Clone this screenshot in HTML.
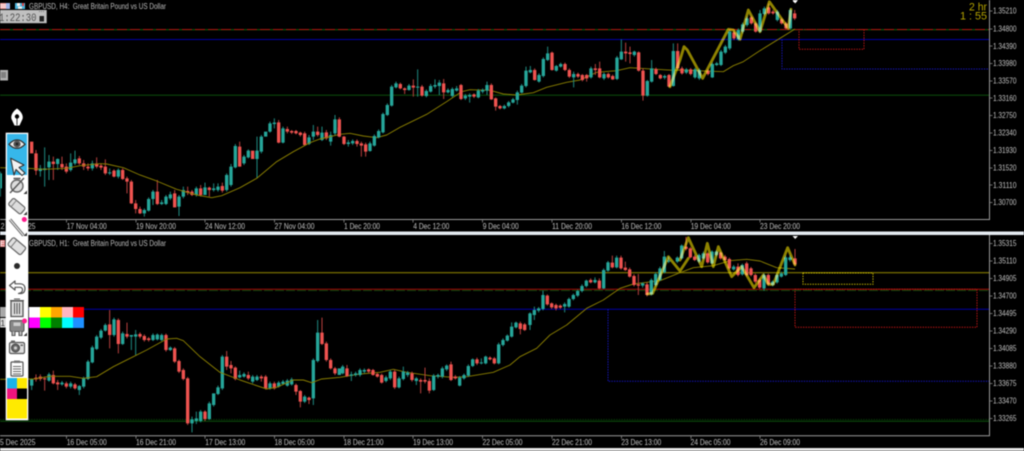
<!DOCTYPE html>
<html>
<head>
<meta charset="utf-8">
<style>
html,body{margin:0;padding:0;background:#000;width:1024px;height:451px;overflow:hidden}
svg{display:block;filter:blur(.45px)}
text{font-family:"Liberation Sans",sans-serif}
.wt{fill:none;stroke:#1f8a80;stroke-width:3}
.bt{fill:none;stroke:#26a69a;stroke-width:10}
.wr{fill:none;stroke:#b8403e;stroke-width:3}
.br{fill:none;stroke:#ef5350;stroke-width:10}
.ma{fill:none;stroke:#8c8000;stroke-width:2.8;stroke-linejoin:round}
.zz{fill:none;stroke:#8f8300;stroke-width:8.5;stroke-linejoin:round;stroke-linecap:round;mix-blend-mode:screen}
.lab{fill:#c0c0c0;font-size:7.8px}
.price{fill:#c0c0c0;font-size:7.8px}
.tri{fill:#333}
</style>
</head>
<body>
<svg width="1024" height="451" viewBox="0 0 1024 451" xmlns="http://www.w3.org/2000/svg">
<rect width="1024" height="451" fill="#000"/>

<!-- top chart horizontal lines -->
<path d="M0 29.7H989" stroke="#0b5c0b" stroke-width="1.1"/>
<path d="M0 29.5H989" stroke="#b01010" stroke-width="1" stroke-dasharray="10 3"/>
<path d="M0 39.5H989" stroke="#0000a8" stroke-width="1"/>
<path d="M0 95.2H989" stroke="#0a480a" stroke-width="1.2"/>
<path d="M799 29.5H864V49.3H799Z" fill="none" stroke="#c01414" stroke-width="1" stroke-dasharray="1.4 1.2"/>
<path d="M782 39.5V69H989" fill="none" stroke="#1414c0" stroke-width="1" stroke-dasharray="1.4 1.2"/>

<!-- bottom chart horizontal lines -->
<path d="M0 272.7H989" stroke="#6e6500" stroke-width="1.3"/>
<path d="M0 290.5H989" stroke="#0b480b" stroke-width="1" stroke-dasharray="9 2"/>
<path d="M0 289.3H989" stroke="#a80808" stroke-width="1"/>
<path d="M0 309.3H989" stroke="#0000a8" stroke-width="1"/>
<path d="M0 421.3H989" stroke="#0a500a" stroke-width="1"/>
<path d="M0 419.5H989" stroke="#0a500a" stroke-width=".8" stroke-dasharray="1.4 1.2"/>
<path d="M608 309.3V381.3H989" fill="none" stroke="#1414c0" stroke-width="1" stroke-dasharray="1.4 1.2"/>
<path d="M803 273H873V284.3H803Z" fill="none" stroke="#c8b800" stroke-width="1" stroke-dasharray="1.4 1.2"/>
<path d="M795 289.3H977V327.3H795Z" fill="none" stroke="#c01414" stroke-width="1" stroke-dasharray="1.4 1.2"/>

<!-- Top chart, part 1 -->
<g transform="scale(.33333)">
<path class="wt" d="M121 495V530M134 442V560M147 465V540M173 475V510M212 460V515M225 452V495M277 482V512M329 505V525M355 505V535M433 625V650M446 592V635M459 570V615M485 600V615M498 585V615M511 575V600M537 585V648M550 560V595M589 560V590M615 548V585M641 550V575M654 550V575M680 520V575M693 492V560M706 432V505M732 465V495M745 448V475M771 410V535M784 405V460M810 365V398M823 355V385M849 380V430M927 405V435M940 375V420M966 380V423M992 395V437M1005 345V405M1 515V590"/>
<path class="wr" d="M108 450V525M160 470V540M186 470V510M199 490V520M238 468V495M251 480V510M264 490V512M290 472V505M303 490V510M316 478V525M342 508V532M368 505V540M381 530V580M394 540V612M407 600V640M420 620V642M472 540V615M524 570V622M563 560V585M576 570V588M602 555V590M628 560V590M667 548V578M719 425V500M836 360V430M862 380V400M875 390V402M888 390V403M901 395V410M914 395V438M953 380V410M979 390V420"/>
<path class="bt" d="M121 505V513M134 505V510M147 485V502M173 477V492M212 488V510M225 478V490M277 490V505M329 517V520M355 510V530M433 630V640M446 597V632M459 575V597M485 607V612M498 590V612M511 583V595M537 590V620M550 570V590M589 565V585M615 562V585M641 565V570M654 560V570M680 525V570M693 500V555M706 438V502M732 470V490M745 452V472M771 452V477M784 410V455M797 395V410M810 370V395M823 368V372M849 385V428M927 412V432M940 395V410M966 398V420M992 405V425M1005 358V400M1 520V565"/>
<path class="br" d="M95 425V460M108 460V512M160 485V492M186 492V502M199 500V515M238 475V490M251 490V500M264 500V505M290 490V500M303 497V503M316 500V520M342 512V530M368 510V537M381 535V545M394 545V610M407 610V627M420 627V640M472 575V612M524 580V622M563 573V578M576 575V585M602 565V585M628 563V570M667 558V572M719 440V500M758 452V477M836 367V428M862 387V395M875 393V398M888 393V400M901 398V405M914 400V435M953 395V405M979 397V415M1018 383V408"/>
<path class="ma" d="M0 503L85 505L130 508L200 505L240 497L300 491L320 492L370 503L420 525L470 543L530 568L590 585L635 593L665 587L720 563L770 535L830 485L880 455L930 428L960 417L1020 403L1050 400L1090 408L1130 413L1160 405L1200 382L1280 343L1340 305L1385 275L1410 269L1470 271L1510 282L1550 285L1600 278L1640 262L1700 247L1740 240L1790 217L1850 212L1890 203L1920 205L2020 211L2040 210L2090 212L2170 215L2200 197L2230 185L2280 152L2340 115L2385 87"/>
</g>
<!-- Top chart, part 2 -->
<g transform="translate(340,0) scale(.33333)">
<path class="wt" d="M25 420V440M38 418V435M90 425V455M103 403V440M116 388V415M129 338V400M142 310V348M155 255V320M168 245V265M207 252V272M233 208V290M259 268V292M272 252V278M285 238V265M298 240V285M324 265V280M337 262V292M350 258V275M376 282V300M389 280V308M415 267V295M428 265V280M441 245V285M493 314V328M506 303V322M519 294V310M532 272V314M545 252V280M558 200V262M571 198V220M597 220V248M610 172V232M623 140V183M649 195V215M662 188V203M701 215V262M753 200V236M792 218V240M831 168V240M844 118V180M883 152V170M922 240V290M935 180V248M974 224V238M1000 130V260"/>
<path class="wr" d="M-2 352V412M12 408V435M51 418V440M64 425V470M77 428V470M181 248V268M194 262V282M220 238V290M246 255V290M311 237V297M363 252V300M402 280V294M454 250V300M467 292V332M480 315V328M584 205V242M636 155V212M675 188V213M688 205V234M714 218V234M727 222V244M740 222V245M766 192V225M779 185V235M805 218V236M818 224V240M857 128V185M870 140V190M896 154V215M909 205V302M948 203V225M961 222V238M987 222V262M1013 130V208"/>
<path class="bt" d="M25 427V432M38 423V430M90 430V453M103 408V437M116 393V412M129 342V397M142 315V345M155 260V317M168 250V262M207 257V270M233 260V263M259 273V288M272 258V275M285 255V260M298 248V258M324 270V277M337 267V288M350 265V272M376 287V295M389 285V290M415 272V292M428 270V275M441 255V272M493 318V325M506 307V318M519 298V308M532 277V300M545 257V278M558 212V258M571 210V217M597 225V245M610 177V228M623 160V180M649 198V212M662 192V200M701 222V232M753 205V232M792 222V235M831 173V237M844 155V178M883 155V165M922 243V287M935 205V245M974 228V233M1000 153V258"/>
<path class="br" d="M-2 358V410M12 410V432M51 423V432M64 430V437M77 433V455M181 252V265M194 265V270M220 257V263M246 260V287M311 250V277M363 255V297M402 283V290M454 255V298M467 295V320M480 318V325M584 210V240M636 158V210M675 192V210M688 210V230M714 222V230M727 225V240M740 225V235M766 205V210M779 205V232M805 222V232M818 228V238M857 155V160M870 157V162M896 157V212M909 212V287M948 207V222M961 225V235M987 225V260M1013 153V205"/>
</g>
<!-- Top chart, part 3 -->
<g transform="translate(680,0) scale(.33333)">
<path class="wt" d="M19 204V222M45 204V236M58 205V240M97 188V234M110 186V198M123 150V198M136 135V162M149 90V150M175 85V122M188 68V100M201 50V80M240 30V98M253 20V46M292 30V64M331 25V88"/>
<path class="wr" d="M6 200V224M32 204V226M84 208V226M162 92V120M214 48V74M227 66V98M266 10V44M279 30V44M305 54V74M318 66V88M344 30V60"/>
<path class="bt" d="M19 208V218M45 208V232M58 210V235M97 192V232M110 190V195M123 155V195M136 140V158M149 95V145M175 90V118M188 73V95M201 55V75M240 40V95M253 25V42M292 35V60M331 30V85"/>
<path class="br" d="M6 205V220M32 208V222M84 212V222M162 97V115M214 52V70M227 70V95M266 22V40M279 35V40M305 58V70M318 70V85M344 40V55"/>
<path class="zz" d="M-30 260L0 180L12 140L22 150L68 235L145 88L160 90L180 118L205 30L240 95L268 5L325 85L333 28"/>
</g>

<!-- Bottom chart, part 1 -->
<g transform="translate(0,225) scale(.33333)">
<path class="wt" d="M95 460V495M147 443V470M186 468V482M212 470V490M238 480V510M251 455V490M264 405V465M277 362V415M290 330V375M303 312V342M316 295V320M342 278V335M368 320V360M394 330V375M407 315V390M459 325V348M472 325V346M485 326V348M511 364V378M576 575V622M589 560V597M602 555V592M628 530V585M641 505V545M654 482V510M667 390V495M719 437V460M732 442V458M758 450V475M771 450V468M810 470V494M836 468V488M849 465V480M862 462V485M875 458V482M914 510V534M940 400V540M953 285V412"/>
<path class="wr" d="M108 448V470M121 448V468M134 455V497M160 437V478M173 465V495M199 470V490M225 474V494M329 255V370M355 280V385M381 293V340M420 322V340M433 328V350M446 336V350M498 326V380M524 366V414M537 404V444M550 430V466M563 456V600M615 556V588M680 378V435M693 408V445M706 424V466M745 440V465M784 450V470M797 450V494M823 470V494M888 476V510M901 495V547M927 515V537M966 278V360M979 350V410M992 400V434M1005 426V450"/>
<path class="bt" d="M95 463V482M147 448V467M186 473V478M212 475V485M238 483V495M251 460V485M264 410V462M277 367V412M290 335V372M303 317V338M316 300V317M342 283V330M368 325V357M394 330V335M407 328V335M459 330V345M472 329V343M485 330V345M511 368V375M576 583V595M589 580V588M602 560V588M628 535V582M641 505V540M654 487V507M667 395V490M719 450V457M732 447V455M758 455V470M771 455V465M810 475V490M836 473V485M849 470V477M862 467V482M875 463V478M914 515V530M940 405V520M953 323V408M1018 430V450"/>
<path class="br" d="M108 458V463M121 455V462M134 460V463M160 450V475M173 472V478M199 475V485M225 478V490M329 298V330M355 285V357M381 327V335M420 327V335M433 333V345M446 340V345M498 330V375M524 370V410M537 408V440M550 435V462M563 460V595M615 560V582M680 395V425M693 420V430M706 428V462M745 450V460M784 455V460M797 455V490M823 475V490M888 480V500M901 498V530M927 518V525M966 323V357M979 355V405M992 405V430M1005 430V445"/>
<path class="ma" d="M0 463L100 462L150 454L210 454L250 460L290 455L340 425L400 395L440 375L500 342L530 340L550 347L600 395L660 442L720 465L800 492L830 487L880 465L910 465L935 473L965 462L1020 457L1080 447L1140 442L1180 433L1220 442L1290 452L1360 457L1400 455L1480 442L1530 420L1560 395L1610 370L1650 330L1700 300L1760 250L1810 225L1860 190L1900 177L1980 167L2040 143L2080 128L2140 122L2190 107L2240 103L2280 108L2330 128L2385 132"/>
</g>
<!-- Bottom chart, part 2 -->
<g transform="translate(340,225) scale(.33333)">
<path class="wt" d="M8 420V448M34 440V468M47 440V455M60 430V455M73 430V445M138 452V472M151 435V465M177 455V490M190 425V466M203 438V456M229 456V480M281 447V498M294 446V460M307 425V460M320 418V438M359 453V484M372 446V464M385 418V456M398 400V426M424 400V418M437 392V418M476 353V418M489 340V364M502 328V350M515 292V338M528 290V310M570 262V315M583 245V285M596 246V262M609 197V256M674 232V262M687 218V248M700 206V226M713 194V216M726 178V202M739 164V187M765 157V175M791 130V192M804 108V140M830 92V130M908 172V188M934 160V212M947 142V184M960 125V168M973 78V145M986 95V114M1012 94V114"/>
<path class="wr" d="M21 420V456M86 430V444M99 432V452M112 444V458M125 446V476M164 435V492M216 440V470M242 460V505M255 428V475M268 460V505M333 410V468M346 450V464M411 398V420M450 394V406M463 396V418M541 290V328M554 294V318M622 208V242M635 232V252M648 236V256M661 238V252M752 160V175M778 160V194M817 92V130M843 92V134M856 110V138M869 128V158M882 148V184M895 147V210M921 172V214"/>
<path class="bt" d="M8 425V445M34 448V452M47 445V450M60 435V450M73 435V440M138 457V468M151 440V460M177 460V487M190 440V462M203 443V450M229 460V468M281 452V495M294 450V455M307 430V455M320 422V433M359 458V482M372 450V460M385 423V452M398 403V423M424 412V415M437 395V415M476 358V415M489 345V360M502 332V347M515 305V335M528 293V307M570 265V300M583 255V270M596 250V257M609 210V252M674 237V245M687 222V245M700 210V222M713 198V212M726 183V198M739 167V183M765 165V172M791 135V190M804 112V137M830 98V127M908 175V182M934 165V208M947 147V180M960 130V165M973 95V142M986 107V110M1012 98V110"/>
<path class="br" d="M21 430V453M86 433V440M99 435V450M112 447V455M125 450V473M164 440V487M216 445V465M242 465V470M255 465V470M268 468V497M333 418V465M346 455V460M411 403V415M450 398V403M463 400V415M541 295V312M554 298V315M622 212V238M635 235V247M648 240V250M661 242V248M752 165V172M778 167V190M817 113V127M843 98V130M856 128V135M869 133V155M882 153V180M895 178V182M921 178V210"/>
<path class="zz" d="M922 207L938 205L985 95L1020 138L1045 100"/>
</g>
<!-- Bottom chart, part 3 -->
<g transform="translate(680,225) scale(.33333)">
<path class="wt" d="M5 58V104M57 86V114M70 80V104M96 76V118M109 76V94M161 120V137M187 116V152M252 145V197M278 166V184M291 146V176M304 140V158M317 92V153M330 92V110"/>
<path class="wr" d="M18 36V76M31 66V100M44 90V108M83 82V116M122 80V104M135 90V108M148 98V134M174 115V154M200 110V154M213 126V154M226 146V174M239 160V192M265 146V182M345 72V122"/>
<path class="bt" d="M5 62V100M57 90V110M70 85V100M96 80V115M109 80V90M161 125V133M187 120V148M252 150V190M278 170V180M291 150V172M304 145V155M317 97V150M330 97V105"/>
<path class="br" d="M18 65V72M31 70V97M44 95V105M83 85V112M122 83V100M135 95V105M148 102V130M174 125V150M200 115V150M213 130V150M226 150V170M239 165V188M265 150V178M345 100V118"/>
<path class="zz" d="M0 105L25 38L65 125L82 55L100 125L115 65L155 155L185 125L222 188L250 150L265 178L280 178L323 68L345 120"/>
</g>

<!-- top markers -->
<path d="M792.5 0H798L795.2 3.5Z" fill="#fff"/>
<circle cx="795" cy="0.5" r="2" fill="#fff"/>
<path d="M792.5 236H798L795.2 239Z" fill="#fff"/>

<!-- axes -->
<path d="M0 219.5H989.5V0" fill="none" stroke="#9a9a9a" stroke-width="1"/>
<path d="M0 435.7H989.5V235" fill="none" stroke="#9a9a9a" stroke-width="1"/>
<path d="M66.5 219.5v3M136 219.5v3M205 219.5v3M274.5 219.5v3M344 219.5v3M413 219.5v3M482.5 219.5v3M552 219.5v3M621.5 219.5v3M691 219.5v3M760 219.5v3M66.5 435.7v3M136 435.7v3M205 435.7v3M274.5 435.7v3M344 435.7v3M413 435.7v3M482.5 435.7v3M552 435.7v3M621.5 435.7v3M691 435.7v3M760 435.7v3" stroke="#8a8a8a" stroke-width=".8"/>
<path d="M989.5 11h3M989.5 29h3M989.5 46h3M989.5 63.5h3M989.5 81h3M989.5 98h3M989.5 115.5h3M989.5 133h3M989.5 150.5h3M989.5 168h3M989.5 185h3M989.5 202.5h3M989.5 243.5h3M989.5 261h3M989.5 278.5h3M989.5 296h3M989.5 313.5h3M989.5 331h3M989.5 348.5h3M989.5 366h3M989.5 383.5h3M989.5 401h3M989.5 418.5h3" stroke="#8a8a8a" stroke-width=".8"/>

<!-- separators -->
<rect x="0" y="231.5" width="1024" height="3.5" fill="#e4eaf0"/>
<rect x="0" y="448" width="1024" height="3" fill="#e6e6e6"/>

<!-- price labels -->
<g class="price">
<text x="993" y="13.7" textLength="23.5" lengthAdjust="spacingAndGlyphs">1.35210</text>
<text x="993" y="31.7" textLength="23.5" lengthAdjust="spacingAndGlyphs">1.34800</text>
<text x="993" y="48.9" textLength="23.5" lengthAdjust="spacingAndGlyphs">1.34390</text>
<text x="993" y="66.2" textLength="23.5" lengthAdjust="spacingAndGlyphs">1.33980</text>
<text x="993" y="83.5" textLength="23.5" lengthAdjust="spacingAndGlyphs">1.33570</text>
<text x="993" y="100.8" textLength="23.5" lengthAdjust="spacingAndGlyphs">1.33160</text>
<text x="993" y="118.1" textLength="23.5" lengthAdjust="spacingAndGlyphs">1.32750</text>
<text x="993" y="135.7" textLength="23.5" lengthAdjust="spacingAndGlyphs">1.32340</text>
<text x="993" y="153.2" textLength="23.5" lengthAdjust="spacingAndGlyphs">1.31930</text>
<text x="993" y="170.6" textLength="23.5" lengthAdjust="spacingAndGlyphs">1.31520</text>
<text x="993" y="187.9" textLength="23.5" lengthAdjust="spacingAndGlyphs">1.31110</text>
<text x="993" y="205.2" textLength="23.5" lengthAdjust="spacingAndGlyphs">1.30700</text>
<text x="993" y="246.1" textLength="23.5" lengthAdjust="spacingAndGlyphs">1.35315</text>
<text x="993" y="263.6" textLength="23.5" lengthAdjust="spacingAndGlyphs">1.35110</text>
<text x="993" y="281.2" textLength="23.5" lengthAdjust="spacingAndGlyphs">1.34905</text>
<text x="993" y="298.7" textLength="23.5" lengthAdjust="spacingAndGlyphs">1.34700</text>
<text x="993" y="316.2" textLength="23.5" lengthAdjust="spacingAndGlyphs">1.34495</text>
<text x="993" y="333.7" textLength="23.5" lengthAdjust="spacingAndGlyphs">1.34290</text>
<text x="993" y="351.2" textLength="23.5" lengthAdjust="spacingAndGlyphs">1.34085</text>
<text x="993" y="368.7" textLength="23.5" lengthAdjust="spacingAndGlyphs">1.33880</text>
<text x="993" y="386.2" textLength="23.5" lengthAdjust="spacingAndGlyphs">1.33675</text>
<text x="993" y="403.7" textLength="23.5" lengthAdjust="spacingAndGlyphs">1.33470</text>
<text x="993" y="421.2" textLength="23.5" lengthAdjust="spacingAndGlyphs">1.33265</text>
</g>

<!-- time labels -->
<g class="lab">
<text x="-3" y="229" textLength="38.5" lengthAdjust="spacingAndGlyphs">12 Nov 2025</text>
<text x="66.7" y="229" textLength="40" lengthAdjust="spacingAndGlyphs">17 Nov 04:00</text>
<text x="136" y="229" textLength="40" lengthAdjust="spacingAndGlyphs">19 Nov 20:00</text>
<text x="205" y="229" textLength="40" lengthAdjust="spacingAndGlyphs">24 Nov 12:00</text>
<text x="274.5" y="229" textLength="40" lengthAdjust="spacingAndGlyphs">27 Nov 04:00</text>
<text x="344" y="229" textLength="36" lengthAdjust="spacingAndGlyphs">1 Dec 20:00</text>
<text x="413.3" y="229" textLength="36" lengthAdjust="spacingAndGlyphs">4 Dec 12:00</text>
<text x="482.7" y="229" textLength="36" lengthAdjust="spacingAndGlyphs">9 Dec 04:00</text>
<text x="552" y="229" textLength="40" lengthAdjust="spacingAndGlyphs">11 Dec 20:00</text>
<text x="621.4" y="229" textLength="40" lengthAdjust="spacingAndGlyphs">16 Dec 12:00</text>
<text x="690.7" y="229" textLength="40" lengthAdjust="spacingAndGlyphs">19 Dec 04:00</text>
<text x="760" y="229" textLength="40" lengthAdjust="spacingAndGlyphs">23 Dec 20:00</text>

<text x="-4" y="444.8" textLength="39.5" lengthAdjust="spacingAndGlyphs">15 Dec 2025</text>
<text x="66.7" y="444.8" textLength="40" lengthAdjust="spacingAndGlyphs">16 Dec 05:00</text>
<text x="136" y="444.8" textLength="40" lengthAdjust="spacingAndGlyphs">16 Dec 21:00</text>
<text x="205.3" y="444.8" textLength="40" lengthAdjust="spacingAndGlyphs">17 Dec 13:00</text>
<text x="274.5" y="444.8" textLength="40" lengthAdjust="spacingAndGlyphs">18 Dec 05:00</text>
<text x="343.5" y="444.8" textLength="40" lengthAdjust="spacingAndGlyphs">18 Dec 21:00</text>
<text x="413" y="444.8" textLength="40" lengthAdjust="spacingAndGlyphs">19 Dec 13:00</text>
<text x="482.5" y="444.8" textLength="40" lengthAdjust="spacingAndGlyphs">22 Dec 05:00</text>
<text x="552" y="444.8" textLength="40" lengthAdjust="spacingAndGlyphs">22 Dec 21:00</text>
<text x="621.2" y="444.8" textLength="40" lengthAdjust="spacingAndGlyphs">23 Dec 13:00</text>
<text x="690.5" y="444.8" textLength="40" lengthAdjust="spacingAndGlyphs">24 Dec 05:00</text>
<text x="760" y="444.8" textLength="40" lengthAdjust="spacingAndGlyphs">26 Dec 09:00</text>
</g>

<!-- titles -->
<text x="29" y="9.2" fill="#bcbcbc" font-size="7.8" textLength="137" lengthAdjust="spacingAndGlyphs" xml:space="preserve">GBPUSD, H4:  Great Britain Pound vs US Dollar</text>
<text x="29" y="246" fill="#bcbcbc" font-size="7.8" textLength="137" lengthAdjust="spacingAndGlyphs" xml:space="preserve">GBPUSD, H1:  Great Britain Pound vs US Dollar</text>

<!-- corner countdown -->
<text x="987" y="10.5" fill="#b5a400" font-size="11" text-anchor="end" textLength="18" lengthAdjust="spacingAndGlyphs">2 hr</text>
<text x="987" y="19.5" fill="#b5a400" font-size="11" text-anchor="end" textLength="27" lengthAdjust="spacingAndGlyphs">1 : 55</text>

<!-- top-left icons -->
<rect x="0" y="3" width="10" height="6" fill="#f4a7a7"/>
<path d="M0 5h10M0 7h10" stroke="#fff" stroke-width=".7"/>
<rect x="6" y="3" width="4" height="6" fill="#9fb4e8"/>
<rect x="15" y="3" width="10" height="6" fill="#4ab4dc"/>
<rect x="17" y="3" width="3" height="3" fill="#f0f0f0"/>
<rect x="22" y="3" width="2" height="3" fill="#e04040"/>
<rect x="18" y="6.5" width="4" height="2.5" fill="#eee"/>

<!-- clock box -->
<rect x="0" y="10" width="46.7" height="13.2" fill="#c0c0c0"/>
<text x="-1" y="20.8" font-size="11" fill="#505050" textLength="37.5" lengthAdjust="spacingAndGlyphs" style="font-family:'Liberation Mono',monospace">1:22:30</text>
<rect x="39.5" y="16" width="4.5" height="5.5" fill="#222"/>
<path d="M39 11.5h5" stroke="#777" stroke-width="1" stroke-dasharray="1 1"/>

<!-- small gray boxes -->
<rect x="0" y="70" width="8" height="10.5" fill="#b0b0b0"/>
<path d="M1 72h5v6H1z" fill="#808080"/>
<rect x="0" y="240" width="5" height="7" fill="#e08080"/>
<text x="0" y="246" font-size="7" fill="#fff">E</text>
<rect x="0" y="307" width="7" height="10" fill="#a8a8a8"/>
<rect x="0" y="318" width="7" height="9.5" fill="#d8d8d8"/>
<text x="0.5" y="325.8" font-size="8" fill="#333">1</text>

<!-- palette -->
<rect x="29" y="307" width="11" height="10.5" fill="#fff"/>
<rect x="40" y="307" width="11" height="10.5" fill="#ffff00"/>
<rect x="51" y="307" width="11" height="10.5" fill="#ffa500"/>
<rect x="62" y="307" width="11" height="10.5" fill="#ffb6c1"/>
<rect x="73" y="307" width="11" height="10.5" fill="#ff0000"/>
<rect x="29" y="317.5" width="11" height="10.5" fill="#ff00ff"/>
<rect x="40" y="317.5" width="11" height="10.5" fill="#00ff00"/>
<rect x="51" y="317.5" width="11" height="10.5" fill="#008000"/>
<rect x="62" y="317.5" width="11" height="10.5" fill="#00ffff"/>
<rect x="73" y="317.5" width="11" height="10.5" fill="#1e90ff"/>

<!-- pen nib -->
<rect x="9" y="107" width="16" height="21" fill="#000"/>
<path d="M17 108.5C12.5 111.5 10.5 116 11.5 119L14.5 125.5H19.5L22.5 119C23.5 116 21.5 111.5 17 108.5Z" fill="#fff"/>
<circle cx="17" cy="116.5" r="2.2" fill="#000"/>
<path d="M17 117V125" stroke="#000" stroke-width=".8"/>

<!-- toolbar -->
<rect x="5.7" y="132.7" width="22.6" height="287.6" fill="#fff"/>
<rect x="7" y="134" width="20" height="41" fill="#36b7ea"/>

<!-- eye -->
<path d="M9 144.3Q17 135.5 25 144.3Q17 152.5 9 144.3Z" fill="#e8e8e8" stroke="#333" stroke-width="1.3"/>
<circle cx="17" cy="144" r="3.6" fill="#555"/>
<circle cx="17" cy="144" r="1.4" fill="#222"/>
<!-- arrow -->
<path d="M10.7 158.3L24 165L19 167.5L25 173L22 175.5L16 169.5L14 175Z" fill="#f2f2f2" stroke="#333" stroke-width="1.1" stroke-linejoin="round"/>
<!-- slashed circle -->
<circle cx="17" cy="186" r="6" fill="#ddd" stroke="#666" stroke-width="1.4"/>
<path d="M10 193L24 178M13.5 178.5h7" stroke="#555" stroke-width="1.4" fill="none"/>
<path d="M27 190.5V194H23.5Z" class="tri"/>
<!-- tag -->
<g transform="rotate(40 17 206)"><rect x="9" y="202" width="16" height="8.5" rx="2" fill="#ddd" stroke="#666" stroke-width="1.2"/><path d="M13 202v8.5" stroke="#888"/></g>
<path d="M27 211.5V215H23.5Z" class="tri"/>
<!-- pencil line -->
<path d="M10 219.5L23.5 235.5" stroke="#666" stroke-width="3" fill="none"/>
<path d="M10 219.5L23.5 235.5" stroke="#e8e8e8" stroke-width="1.2" fill="none"/>
<path d="M27 232.5V236H23.5Z" class="tri"/>
<!-- eraser -->
<g transform="rotate(40 17 246)"><rect x="8.5" y="241.5" width="17" height="9.5" rx="2" fill="#e0e0e0" stroke="#666" stroke-width="1.2"/><path d="M13 241.5v9.5" stroke="#777"/></g>
<!-- dot -->
<circle cx="17" cy="266" r="3" fill="#2a2a2a"/>
<!-- undo -->
<path d="M15 281L9.5 285.5L15 290V287.3H20C22 287.3 22.5 289 22.5 290C22.5 292 21 293 18.5 293.5H21.5C24 293 25 291 25 288.5C25 285.5 23 283.8 20 283.8H15Z" fill="#fff" stroke="#555" stroke-width="1.2" stroke-linejoin="round"/>
<!-- trash -->
<path d="M11 301H23V316.5H11Z" fill="#e0e0e0" stroke="#555" stroke-width="1.3"/>
<path d="M10 300.5H24M14 299H20M14.5 303V314M17 303V314M19.5 303V314" stroke="#555" stroke-width="1.1" fill="none"/>
<!-- printer/robot -->
<rect x="10" y="320.5" width="14" height="11" rx="1.5" fill="#888" stroke="#555"/>
<rect x="13.5" y="322.5" width="7" height="3.5" fill="#ccc"/>
<path d="M12 331.5v4h3v-4M19 331.5v4h3v-4" fill="#bbb" stroke="#555"/>
<path d="M27 332.5V336H23.5Z" class="tri"/>
<circle cx="24.5" cy="321" r="2.5" fill="#ff1b8d"/>
<circle cx="24.3" cy="219.5" r="2.5" fill="#ff1b8d"/>
<!-- camera -->
<rect x="9.5" y="342.5" width="15" height="11" rx="1.5" fill="#ddd" stroke="#555" stroke-width="1.2"/>
<rect x="11" y="340.5" width="4" height="2" fill="#666"/>
<circle cx="15.5" cy="348" r="4" fill="#666" stroke="#444"/>
<circle cx="15.5" cy="348" r="1.6" fill="#ccc"/>
<rect x="20.5" y="344.5" width="2.5" height="1.5" fill="#666"/>
<!-- clipboard -->
<rect x="11" y="362" width="12" height="14" rx="1" fill="#fff" stroke="#555" stroke-width="1.2"/>
<rect x="14" y="360.5" width="6" height="2.5" fill="#777"/>
<path d="M13 366.5h8M13 369h8M13 371.5h8M13 374h8" stroke="#666" stroke-width=".9"/>
<!-- colour squares -->
<rect x="7" y="378" width="10" height="10.5" fill="#1ab2e8"/>
<rect x="17" y="378" width="10" height="10.5" fill="#ffea00"/>
<rect x="7" y="388.5" width="10" height="10.5" fill="#f0147e"/>
<rect x="17" y="388.5" width="10" height="10.5" fill="#000"/>
<rect x="7" y="399" width="20" height="19.5" fill="#ffea00"/>
</svg>
</body>
</html>
